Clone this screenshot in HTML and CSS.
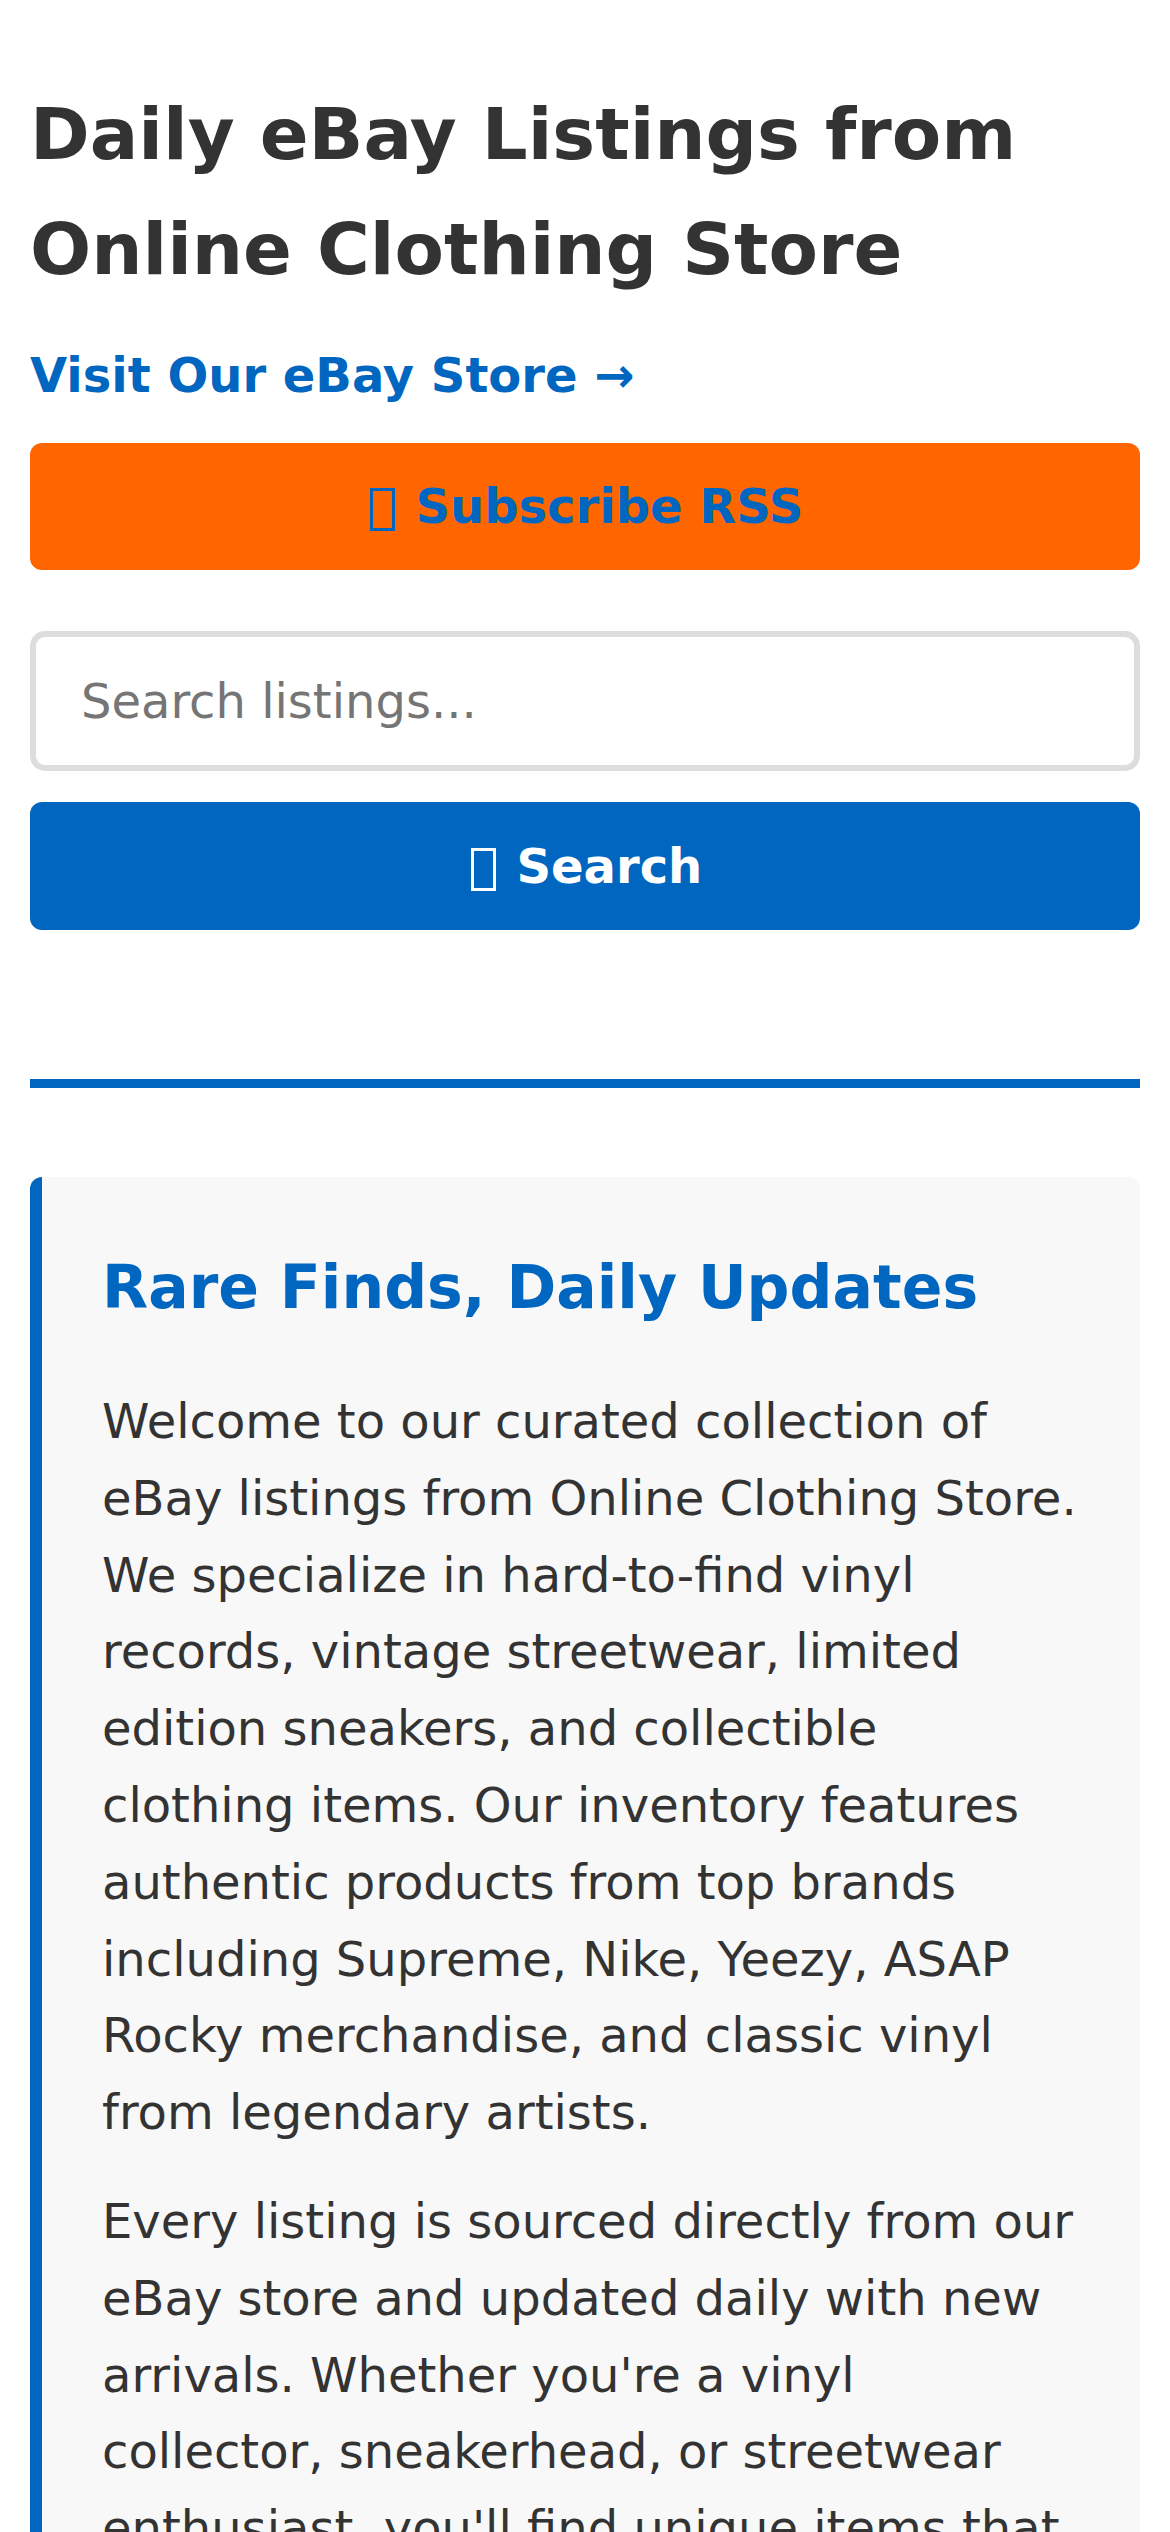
FILE: index.html
```html
<!DOCTYPE html>
<html lang="en">
<head>
<meta charset="utf-8">
<title>Daily eBay Listings from Online Clothing Store</title>
<link rel="stylesheet" href="styles.css">
</head>
<body>
<div class="page">
  <header class="header">
    <h1 class="title">Daily eBay Listings from Online Clothing Store</h1>
    <a class="store-link" href="#">Visit Our eBay Store →</a>
    <a class="rss-btn" href="#"><span class="tofu"></span> Subscribe RSS</a>
  </header>
  <form class="search">
    <input class="search-input" type="text" placeholder="Search listings...">
    <button class="search-btn" type="button"><span class="tofu"></span> Search</button>
  </form>
  <hr class="divider">
  <section class="intro">
    <h2 class="intro-title">Rare Finds, Daily Updates</h2>
    <p class="intro-text">Welcome to our curated collection of eBay listings from Online Clothing Store. We specialize in hard-to-find vinyl records, vintage streetwear, limited edition sneakers, and collectible clothing items. Our inventory features authentic products from top brands including Supreme, Nike, Yeezy, ASAP Rocky merchandise, and classic vinyl from legendary artists.</p>
    <p class="intro-text">Every listing is sourced directly from our eBay store and updated daily with new arrivals. Whether you're a vinyl collector, sneakerhead, or streetwear enthusiast, you'll find unique items that you won't find anywhere else. Check back every day for the latest additions.</p>
  </section>
</div>
</body>
</html>
```
FILE: styles.css
```css
html, body {
  margin: 0;
  padding: 0;
  background: #ffffff;
}

body {
  font-family: "DejaVu Sans", Verdana, sans-serif;
  color: #333333;
  line-height: 1.6;
  font-size: 48px;
}

.page {
  padding: 0 30px;
}

.header {
  display: flex;
  flex-direction: column;
}

.title {
  font-size: 72px;
  font-weight: bold;
  line-height: 1.6;
  margin: 77px 0 30px;
  color: #333333;
}

.store-link {
  font-size: 48px;
  font-weight: bold;
  color: #0066c0;
  text-decoration: none;
  align-self: flex-start;
}

.rss-btn {
  margin-top: 29px;
  display: block;
  background: #ff6600;
  color: #0066c0;
  font-weight: bold;
  font-size: 48px;
  text-align: center;
  text-decoration: none;
  padding: 25px;
  border-radius: 12px;
}

.tofu {
  display: inline-block;
  box-sizing: border-box;
  width: 25px;
  height: 43px;
  border: 3px solid currentColor;
  vertical-align: -8px;
  margin: 0 4px 0 3px;
}

.search {
  margin: 61px 0 0;
  display: flex;
  flex-direction: column;
  gap: 31px;
}

.search-input {
  font-family: "DejaVu Sans", Verdana, sans-serif;
  font-size: 48px;
  line-height: normal;
  padding: 36px 45px;
  border: 6px solid #dddddd;
  border-radius: 15px;
  color: #333333;
  background: #ffffff;
  outline: none;
  margin: 0;
}

.search-input::placeholder {
  color: #757575;
}

.search-btn {
  font-family: "DejaVu Sans", Verdana, sans-serif;
  font-size: 48px;
  font-weight: bold;
  line-height: normal;
  background: #0066c0;
  color: #ffffff;
  border: none;
  border-radius: 12px;
  padding: 36px;
  margin: 0;
}

.divider {
  margin: 149px 0 0;
  height: 9px;
  border: none;
  background: #0066c0;
}

.intro {
  margin-top: 89px;
  background: #f8f8f8;
  border-left: 12px solid #0066c0;
  border-radius: 12px;
  padding: 62px 58px 60px 60px;
}

.intro-title {
  margin: 0 0 48px;
  font-size: 60px;
  font-weight: bold;
  line-height: 1.6;
  color: #0066c0;
}

.intro-text {
  margin: 0 0 32px;
  font-size: 48px;
  line-height: 1.6;
  color: #333333;
}
```
